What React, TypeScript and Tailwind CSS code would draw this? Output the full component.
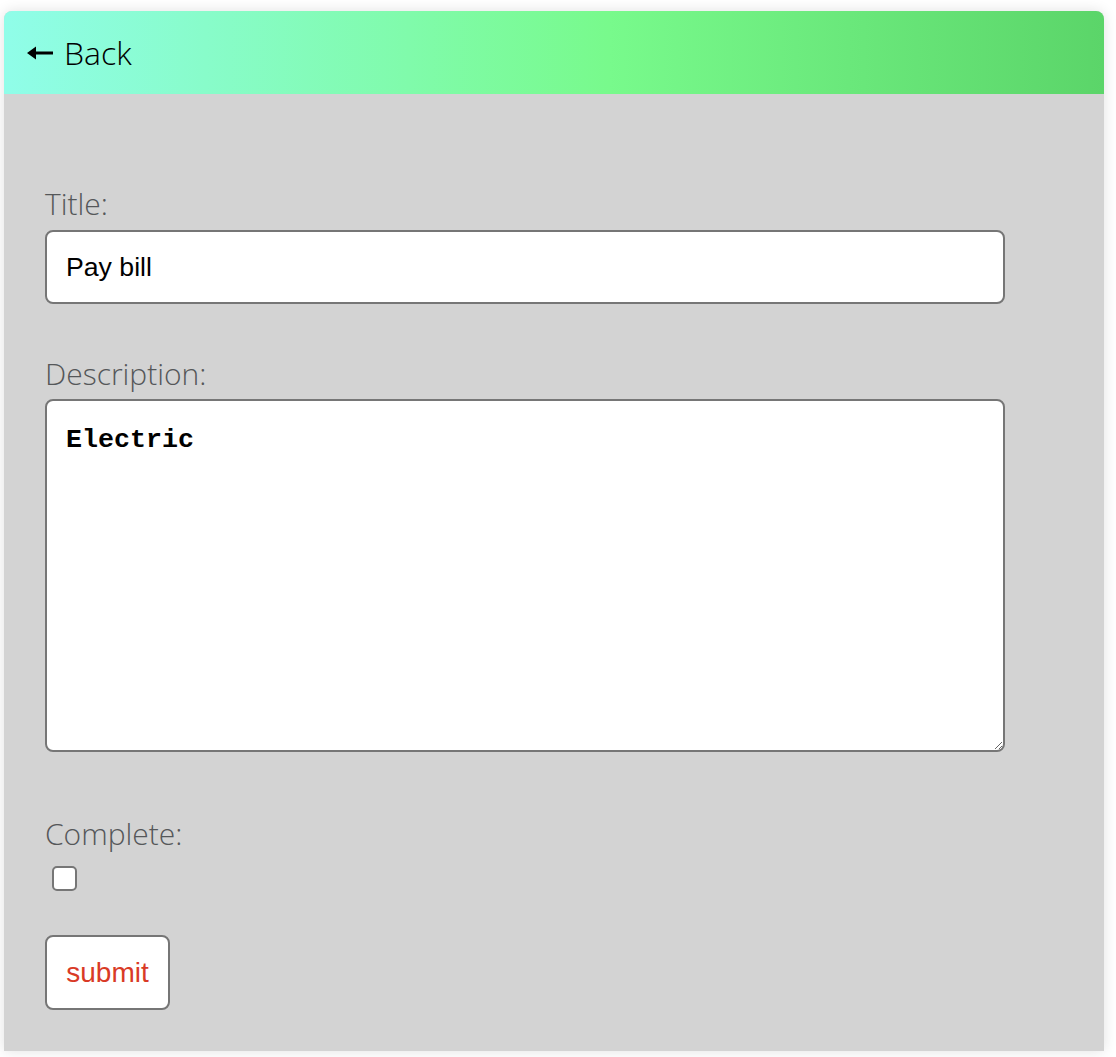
import { useState } from 'react';

function App() {
  const [title, setTitle] = useState('Pay bill');
  const [description, setDescription] = useState('Electric');
  const [complete, setComplete] = useState(false);

  return (
    <div className="min-h-screen bg-white pt-[11px] pl-[4px]" style={{ fontFamily: '"Open Sans", "Noto Sans", sans-serif' }}>
      <div className="w-[1100px] bg-[#d3d3d3] shadow-[0_0_14px_rgba(0,0,0,0.12)] rounded-t-[8px]">
        {/* Header */}
        <div className="h-[83px] flex items-center pl-[23px] rounded-t-[8px] bg-[linear-gradient(to_right,#90fde9_0%,#78fa8c_55%,#5bd569_100%)]">
          <button className="flex items-center gap-[11px] text-black text-[32px] font-light leading-none">
            <svg width="26" height="14" viewBox="0 0 26 14" className="mt-[1px]">
              <path d="M0 7 L9 0.5 L9 5.5 L26 5.5 L26 8.5 L9 8.5 L9 13.5 Z" fill="#000" />
            </svg>
            <span>Back</span>
          </button>
        </div>

        {/* Form */}
        <form className="pl-[41px] pt-[92px] pb-[41px]" onSubmit={(e) => e.preventDefault()}>
          <label className="block text-[30px] font-light text-[#555759] leading-[36px]">Title:</label>
          <input
            value={title}
            onChange={(e) => setTitle(e.target.value)}
            className="mt-[8px] block w-[960px] h-[74px] bg-white border-2 border-[#767676] rounded-[8px] px-[19px] text-[26.67px] text-black outline-none"
            style={{ fontFamily: '"Liberation Sans", Arial, sans-serif' }}
          />

          <label className="mt-[52px] block text-[30px] font-light text-[#555759] leading-[36px]">Description:</label>
          <textarea
            value={description}
            onChange={(e) => setDescription(e.target.value)}
            className="mt-[7px] block w-[960px] h-[353px] bg-white border-2 border-[#767676] rounded-[8px] px-[19px] pt-[19px] text-[26.67px] font-bold text-black outline-none"
            style={{ fontFamily: '"Liberation Mono", "Courier New", monospace' }}
          />

          <label className="mt-[64px] block text-[30px] font-light text-[#555759] leading-[36px]">Complete:</label>
          <div className="mt-[14px] pl-[7px] flex">
            <button
              type="button"
              onClick={() => setComplete(!complete)}
              className="w-[25px] h-[25px] bg-white border-2 border-[#767676] rounded-[5px] flex items-center justify-center text-[16px] leading-none"
            >
              {complete ? '✓' : ''}
            </button>
          </div>

          <button
            type="submit"
            className="mt-[44px] block w-[125px] h-[75px] bg-white border-2 border-[#767676] rounded-[8px] text-[28px] text-[#d93a26]"
            style={{ fontFamily: '"Liberation Sans", Arial, sans-serif' }}
          >
            submit
          </button>
        </form>
      </div>
    </div>
  );
}

export default App;
